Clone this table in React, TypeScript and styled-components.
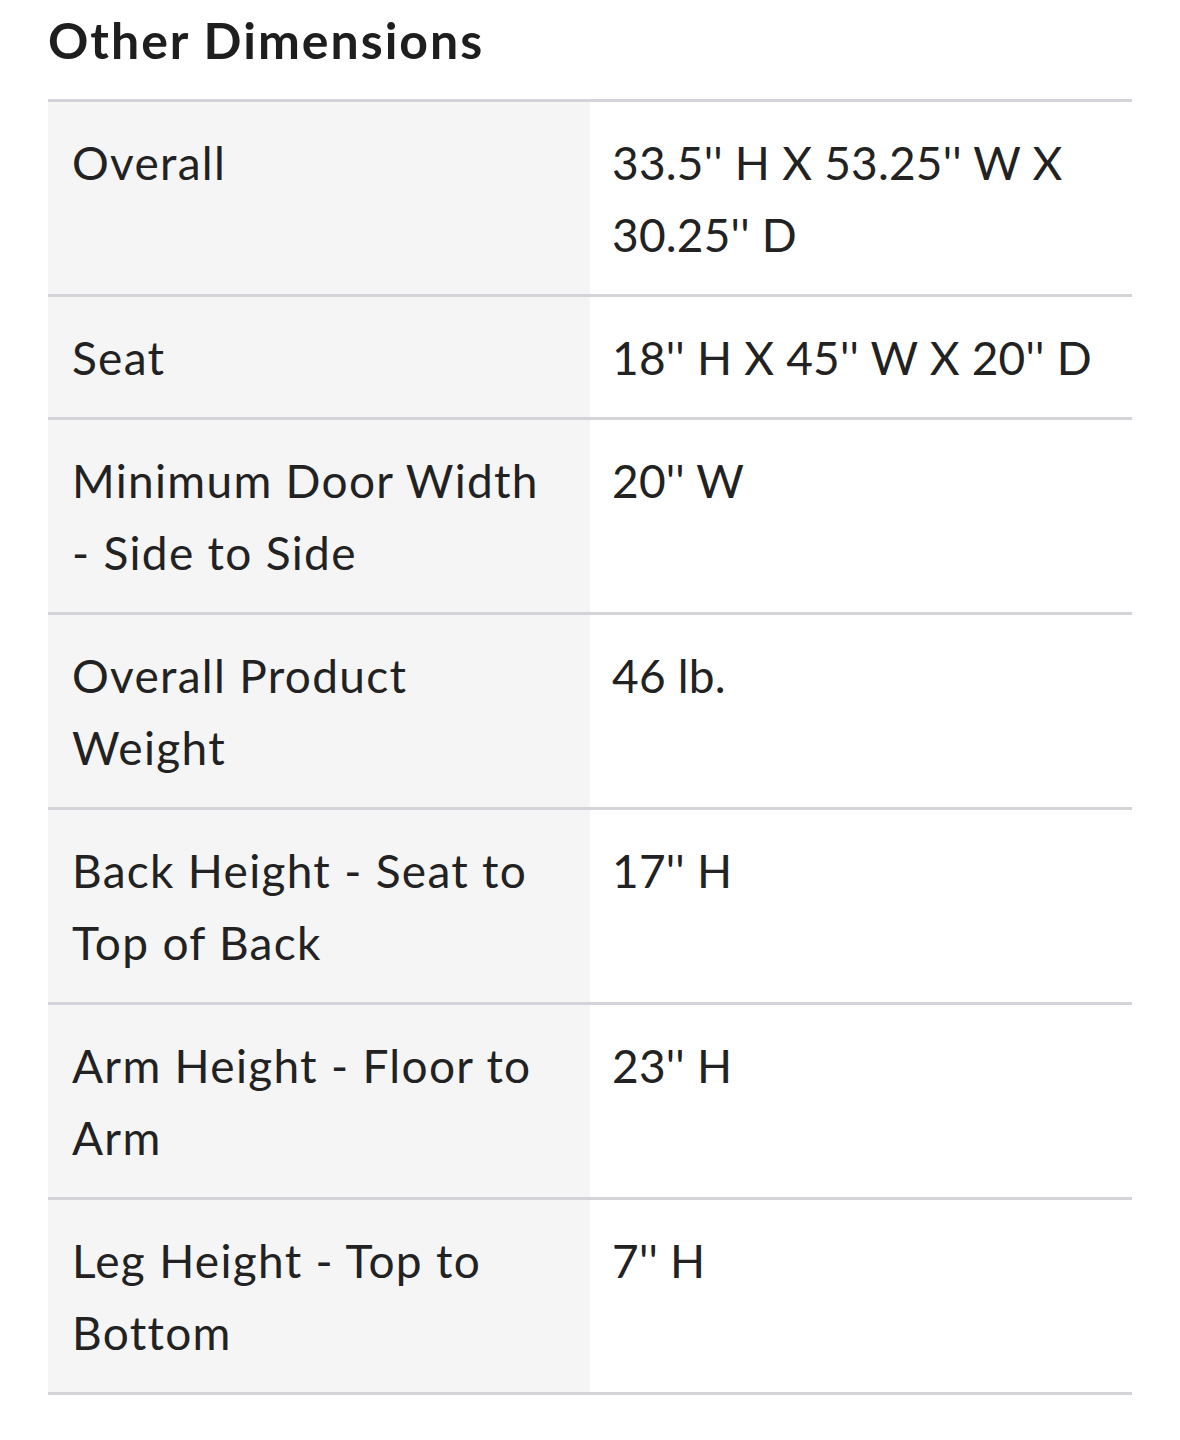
import React from "react";
import styled, { createGlobalStyle } from "styled-components";

const Global = createGlobalStyle`
  html, body { margin: 0; padding: 0; background: #ffffff; }
  body { font-family: Lato, "Open Sans", sans-serif; color: #222222; }
`;

const Page = styled.div`
  padding: 0 48px;
`;

const Heading = styled.h2`
  margin: 0;
  font-size: 50px;
  font-weight: 700;
  line-height: 80px;
  letter-spacing: 2px;
  color: #1e1e1e;
  padding-bottom: 19px;
`;

const Table = styled.div`
  display: grid;
  grid-template-columns: 1fr 1fr;
  border-top: 3px solid #d3d3d8;
`;

const Cell = styled.div<{ $label?: boolean }>`
  background: ${(p) => (p.$label ? "#f5f5f5" : "#ffffff")};
  border-bottom: 3px solid #d3d3d8;
  padding: ${(p) => (p.$label ? "25px 36px 23px 24px" : "25px 24px 23px 22px")};
  font-size: 46px;
  line-height: 72px;
  letter-spacing: ${(p) => (p.$label ? "1.3px" : "0.2px")};
  color: #222222;
`;

const rows: [string, string][] = [
  ["Overall", "33.5'' H X 53.25'' W X 30.25'' D"],
  ["Seat", "18'' H X 45'' W X 20'' D"],
  ["Minimum Door Width - Side to Side", "20'' W"],
  ["Overall Product Weight", "46 lb."],
  ["Back Height - Seat to Top of Back", "17'' H"],
  ["Arm Height - Floor to Arm", "23'' H"],
  ["Leg Height - Top to Bottom", "7'' H"],
];

export default function App() {
  return (
    <Page>
      <Global />
      <Heading>Other Dimensions</Heading>
      <Table>
        {rows.map(([k, v]) => (
          <React.Fragment key={k}>
            <Cell $label>{k}</Cell>
            <Cell>{v}</Cell>
          </React.Fragment>
        ))}
      </Table>
    </Page>
  );
}
